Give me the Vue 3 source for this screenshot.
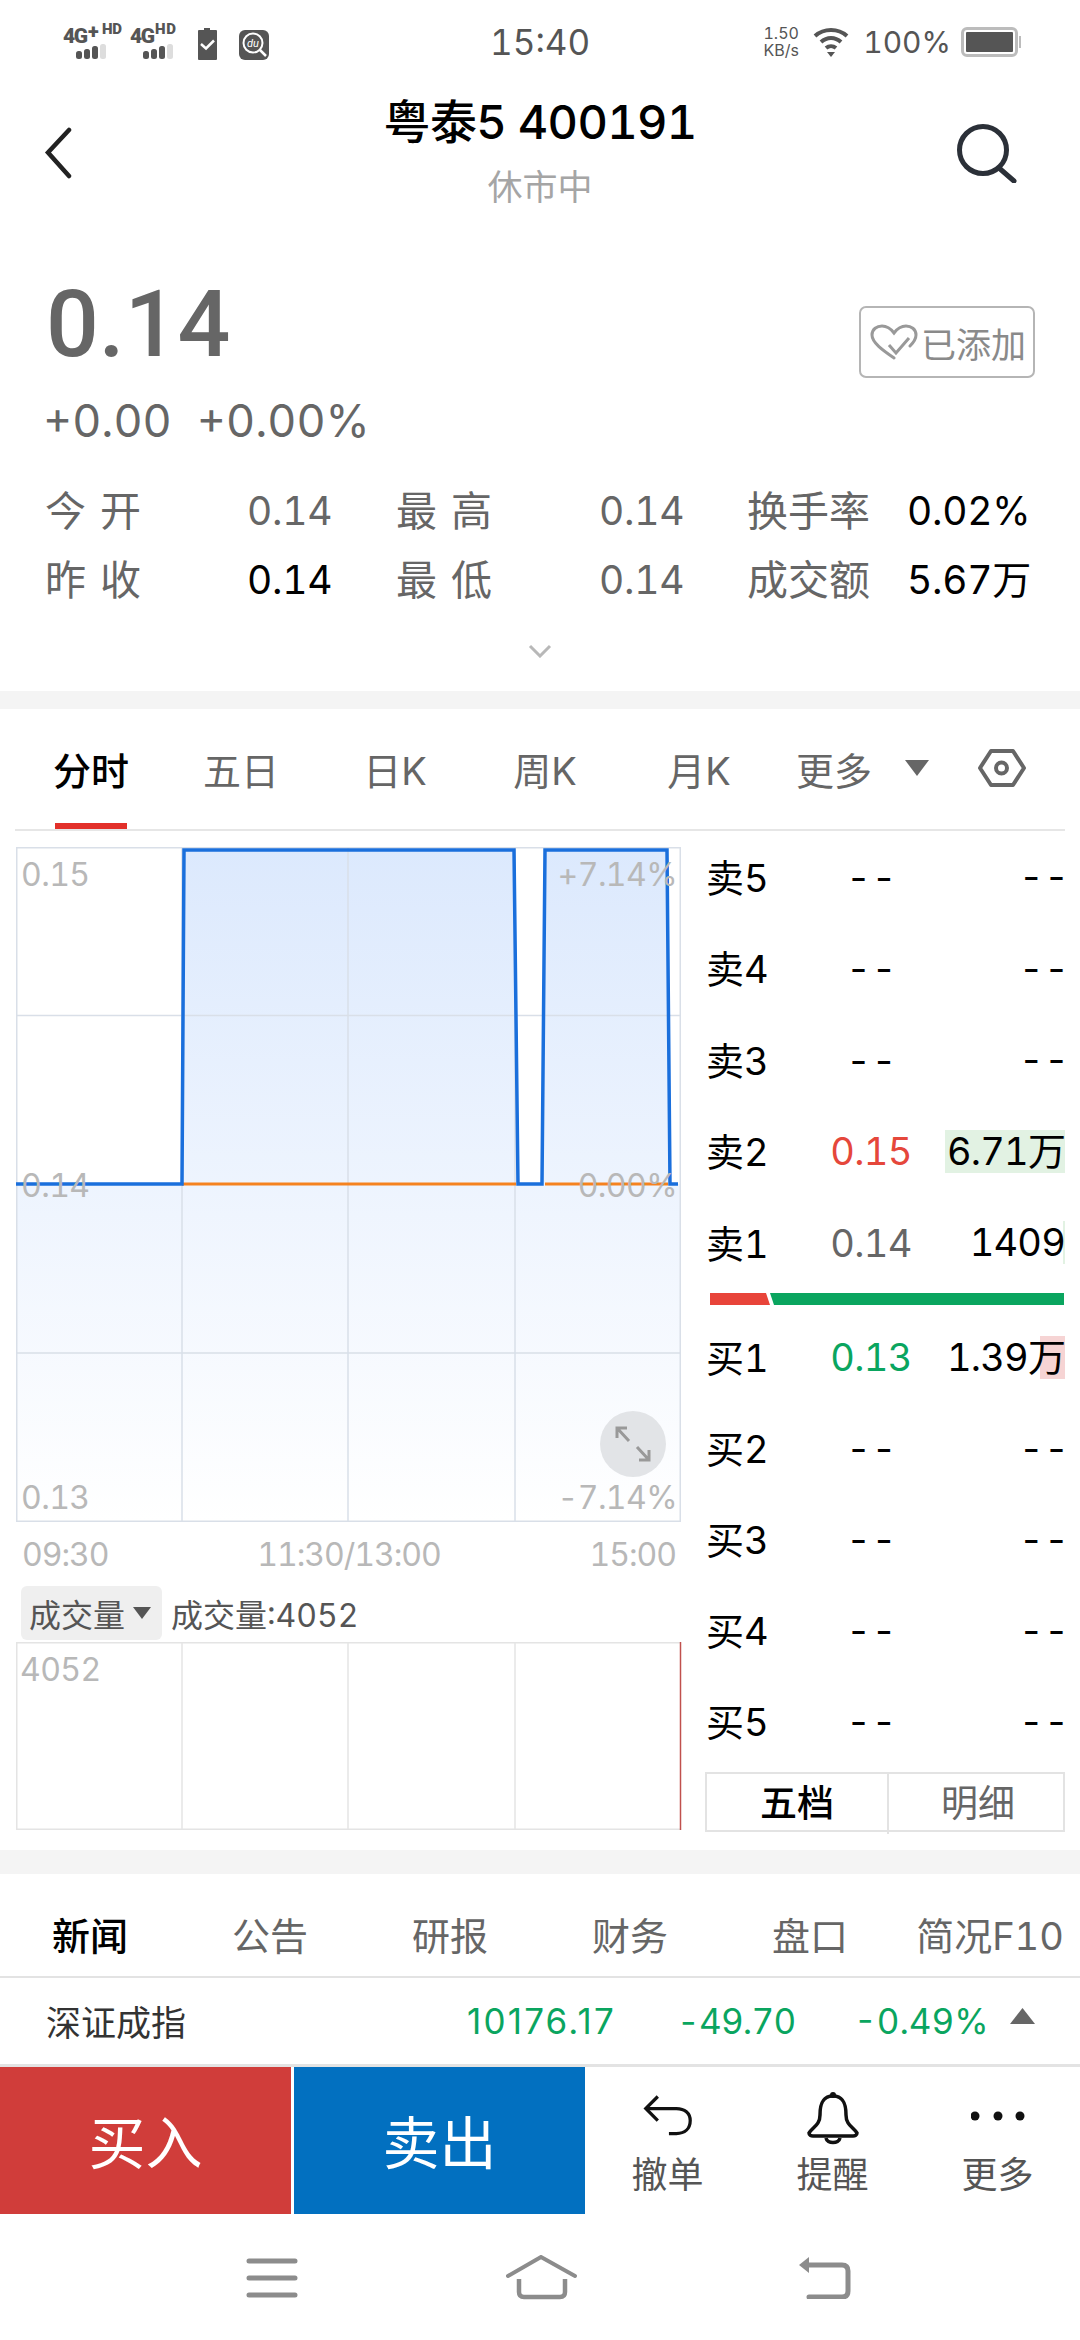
<script setup>
const stats = [
  ['今 开', '0.14', 'g', '最 高', '0.14', 'g', '换手率', '0.02%', 'k'],
  ['昨 收', '0.14', 'k', '最 低', '0.14', 'g', '成交额', '5.67万', 'k'],
]
const sells = [
  { l: '卖5', p: '- -', v: '- -' },
  { l: '卖4', p: '- -', v: '- -' },
  { l: '卖3', p: '- -', v: '- -' },
  { l: '卖2', p: '0.15', v: '6.71万', c: 'red', bg: 120, col: '#e2f2e3' },
  { l: '卖1', p: '0.14', v: '1409', c: 'gray', bg: 2, col: '#e2f2e3' },
]
const buys = [
  { l: '买1', p: '0.13', v: '1.39万', c: 'green', bg: 25, col: '#f6d4d4' },
  { l: '买2', p: '- -', v: '- -' },
  { l: '买3', p: '- -', v: '- -' },
  { l: '买4', p: '- -', v: '- -' },
  { l: '买5', p: '- -', v: '- -' },
]
const newsTabs = ['新闻', '公告', '研报', '财务', '盘口', '简况F10']
const vLines = [166, 332, 499]
</script>

<template>
  <div class="page">
    <div class="status">
      <svg class="st-left" width="230" height="44" viewBox="0 0 230 44">
        <g fill="#555" font-family="Roboto, sans-serif" font-weight="900">
          <text x="2" y="24" font-size="21" textLength="25">4G</text>
          <text x="27" y="19" font-size="20">+</text>
          <text x="41" y="15" font-size="15" textLength="20">HD</text>
          <text x="69" y="24" font-size="21" textLength="25">4G</text>
          <text x="94" y="15" font-size="15" textLength="21">HD</text>
          <rect x="15" y="32" width="6" height="8" rx="2.500" />
          <rect x="23" y="30" width="6" height="10" rx="2.500" />
          <rect x="31" y="27" width="6" height="13" rx="2.500" />
          <rect x="82" y="32" width="6" height="8" rx="2.500" />
          <rect x="90" y="30" width="6" height="10" rx="2.500" />
          <rect x="98" y="27" width="6" height="13" rx="2.500" />
        </g>
        <rect x="39" y="25" width="6" height="15" rx="2.500" fill="#ddd" />
        <rect x="106" y="25" width="6" height="15" rx="2.500" fill="#ddd" />
        <path d="M137 12a1 1 0 0 1 1-1h5v-2h6v2h6a1 1 0 0 1 1 1v28a1 1 0 0 1-1 1h-17a1 1 0 0 1-1-1z" fill="#555" />
        <path d="M140 25l5 4.500 8-8" fill="none" stroke="#fff" stroke-width="2.500" />
        <rect x="178" y="11" width="30" height="30" rx="6" fill="#555" />
        <circle cx="192" cy="24" r="9.500" fill="#555" stroke="#fff" stroke-width="2" />
        <path d="M199 31l6 6" stroke="#fff" stroke-width="2.500" />
        <text x="192" y="28" font-size="11" font-style="italic" fill="#fff" text-anchor="middle" font-family="Roboto, sans-serif">du</text>
      </svg>
      <div class="st-time">15:40</div>
      <div class="st-right">
        <div class="speed"><span>1.50</span><span>KB/s</span></div>
        <svg class="wifi" width="36" height="30" viewBox="0 0 36 30">
          <path d="M2 9C11 1 25 1 34 9" fill="none" stroke="#555" stroke-width="4" />
          <path d="M8 15C14 9.500 22 9.500 28 15" fill="none" stroke="#555" stroke-width="4" />
          <path d="M13 21C16 18.500 20 18.500 23 21" fill="none" stroke="#555" stroke-width="4" />
          <path d="M14 25h8l-4 5z" fill="#555" />
        </svg>
        <span class="pct">100%</span>
        <div class="batt"><i></i></div>
        <div class="nub"></div>
      </div>
    </div>

    <div class="header">
      <svg class="back" width="30" height="52" viewBox="0 0 30 52">
        <path d="M26 3L5 25.500 26 49" fill="none" stroke="#222" stroke-width="4.500" stroke-linecap="round" />
      </svg>
      <div class="titles">
        <div class="title">粤泰5 400191</div>
        <div class="sub">休市中</div>
      </div>
      <svg class="search" width="62" height="60" viewBox="0 0 62 60">
        <circle cx="27" cy="27" r="23.500" fill="none" stroke="#2b3038" stroke-width="5" />
        <path d="M43 45l15 13" stroke="#2b3038" stroke-width="5" stroke-linecap="round" />
      </svg>
    </div>

    <div class="quote">
      <div class="price-row">
        <div>
          <div class="price">0.14</div>
          <div class="change"><span>+0.00</span><span>+0.00%</span></div>
        </div>
        <div class="added">
          <svg width="48" height="36" viewBox="0 0 48 36">
            <path d="M24 34C14 27 2 19 2 11 2 5 7 2 12 2c5 0 9 3 12 7 3-4 7-7 12-7 5 0 10 3 10 9 0 4-3 8-6 11" fill="none" stroke="#999" stroke-width="3" stroke-linecap="round" />
            <path d="M19 21l7 8 13-15" fill="none" stroke="#999" stroke-width="3" />
          </svg>
          <span>已添加</span>
        </div>
      </div>
      <div class="stats">
        <template v-for="(r, i) in stats" :key="i">
          <span class="lab">{{ r[0] }}</span><span :class="r[2]">{{ r[1] }}</span>
          <span class="lab">{{ r[3] }}</span><span :class="r[5]">{{ r[4] }}</span>
          <span class="lab">{{ r[6] }}</span><span :class="r[8]">{{ r[7] }}</span>
        </template>
      </div>
      <svg class="chev" width="24" height="14" viewBox="0 0 24 14">
        <path d="M2 2l10 10 10-10" fill="none" stroke="#b8b8b8" stroke-width="3" />
      </svg>
    </div>

    <div class="band"></div>

    <div class="tabs">
      <div class="tab on">分时</div>
      <div class="tab">五日</div>
      <div class="tab">日K</div>
      <div class="tab">周K</div>
      <div class="tab">月K</div>
      <div class="tab">更多</div>
      <svg class="tri" width="24" height="16" viewBox="0 0 24 16"><path d="M0 0h24L12 16z" fill="#666" /></svg>
      <svg class="hex" width="48" height="40" viewBox="0 0 48 40">
        <path d="M13 3h22l11 17-11 17H13L2 20z" fill="none" stroke="#666" stroke-width="4" stroke-linejoin="round" />
        <circle cx="23.500" cy="20" r="5.500" fill="none" stroke="#666" stroke-width="4" />
      </svg>
    </div>

    <div class="body">
      <div class="left">
        <div class="chart">
          <svg width="666" height="675" viewBox="0 0 666 675">
            <defs>
              <linearGradient id="fillg" x1="0" y1="0" x2="0" y2="1">
                <stop offset="0" stop-color="#dce9fd" />
                <stop offset="1" stop-color="#ffffff" />
              </linearGradient>
            </defs>
            <rect x="0.500" y="0.500" width="664" height="674" fill="#fff" />
            <path d="M0 337H166L168 3H498L502 337H526L529 3H651L654 337H664V674H0Z" fill="url(#fillg)" />
            <g stroke="#d9dfe8" stroke-width="1.500" fill="none">
              <path d="M0.750 0V675M664.250 0V675M0 0.750H665M0 168.500H665M0 506H665M0 674.250H665" />
              <path v-for="x in vLines" :key="x" :d="`M${x} 0V675`" />
            </g>
            <path d="M166 337H500M529 337H652" stroke="#f5821f" stroke-width="3" fill="none" />
            <path d="M0 337H166L168 3H498L502 337H526L529 3H651L654 337H662" stroke="#1a6fdc" stroke-width="3.500" fill="none" />
          </svg>
          <span class="ax tl">0.15</span>
          <span class="ax tr">+7.14%</span>
          <span class="ax ml">0.14</span>
          <span class="ax mr">0.00%</span>
          <span class="ax bl">0.13</span>
          <span class="ax br">-7.14%</span>
          <div class="expand">
            <svg width="36" height="36" viewBox="0 0 36 36">
              <path d="M2 12V2H12M2 2L14 15M34 24V34H24M34 34L22 21" fill="none" stroke="#999" stroke-width="3" />
            </svg>
          </div>
        </div>
        <div class="times"><span>09:30</span><span>11:30/13:00</span><span>15:00</span></div>
        <div class="vol-head">
          <div class="drop">成交量<svg width="18" height="12" viewBox="0 0 18 12"><path d="M0 0h18L9 12z" fill="#555" /></svg></div>
          <span>成交量:4052</span>
        </div>
        <div class="vol">
          <svg width="666" height="188" viewBox="0 0 666 188">
            <g stroke="#e4e4e4" stroke-width="1.500" fill="none">
              <path d="M0.750 0V188M0 0.750H665M0 187.250H665" />
              <path v-for="x in vLines" :key="x" :d="`M${x} 0V188`" />
            </g>
            <path d="M664.500 0V188" stroke="#c0504d" stroke-width="1.500" />
          </svg>
          <span class="ax vlab">4052</span>
        </div>
      </div>

      <div class="right">
        <div v-for="r in sells" :key="r.l" class="row sell">
          <span class="r-lab">{{ r.l }}</span>
          <span class="r-p" :class="r.c">{{ r.p }}</span>
          <span class="r-v">
            <i v-if="r.bg" class="r-bg" :style="{ width: r.bg + 'px', background: r.col }"></i>
            <b :class="{ dash: !r.bg }">{{ r.v }}</b>
          </span>
        </div>
        <svg class="ratio" width="354" height="12" viewBox="0 0 354 12">
          <path d="M0 0H56L60 12H0Z" fill="#e8443a" />
          <path d="M60 0H354V12H64Z" fill="#0aa55f" />
        </svg>
        <div v-for="r in buys" :key="r.l" class="row buy">
          <span class="r-lab">{{ r.l }}</span>
          <span class="r-p" :class="r.c">{{ r.p }}</span>
          <span class="r-v">
            <i v-if="r.bg" class="r-bg" :style="{ width: r.bg + 'px', background: r.col }"></i>
            <b :class="{ dash: !r.bg }">{{ r.v }}</b>
          </span>
        </div>
        <div class="seg"><div class="seg-on">五档</div><div>明细</div></div>
      </div>
    </div>

    <div class="band low"></div>

    <div class="news">
      <div v-for="(t, i) in newsTabs" :key="t" class="n-tab" :class="{ on: i === 0 }">{{ t }}</div>
    </div>

    <div class="index">
      <span class="i-name">深证成指</span>
      <span class="i-a">10176.17</span>
      <span class="i-b">-49.70</span>
      <span class="i-c">-0.49%</span>
      <svg width="25" height="16" viewBox="0 0 25 16"><path d="M12.500 0L25 16H0z" fill="#666" /></svg>
    </div>

    <div class="actions">
      <div class="buybtn">买入</div>
      <div class="sellbtn">卖出</div>
      <div class="act">
        <svg class="i-undo" width="50" height="44" viewBox="0 0 54 46">
          <path d="M16 3L3 16l13 13" fill="none" stroke="#111" stroke-width="3.500" />
          <path d="M4 16H36C45 16 51 21 51 29 51 38 45 43 36 43H28" fill="none" stroke="#111" stroke-width="3.500" />
        </svg>
        <span>撤单</span>
      </div>
      <div class="act">
        <svg class="i-bell" width="54" height="54" viewBox="0 0 54 54">
          <path d="M27 5C16 5 14 14 14 24 14 34 7 36 3 42 3 44 5 45 7 45H47C49 45 51 44 51 42 47 36 40 34 40 24 40 14 38 5 27 5Z" fill="none" stroke="#111" stroke-width="3.500" />
          <circle cx="27" cy="4" r="3" fill="#111" />
          <path d="M20 47C21 53 33 53 34 47" fill="none" stroke="#111" stroke-width="3.500" />
        </svg>
        <span>提醒</span>
      </div>
      <div class="act">
        <svg class="i-more" width="54" height="44" viewBox="0 0 54 44">
          <circle cx="4" cy="22" r="4.500" fill="#111" />
          <circle cx="27" cy="22" r="4.500" fill="#111" />
          <circle cx="49" cy="22" r="4.500" fill="#111" />
        </svg>
        <span>更多</span>
      </div>
    </div>

    <div class="nav">
      <svg class="n-menu" width="52" height="40" viewBox="0 0 52 40">
        <path d="M3 3H49M3 20H49M3 37H49" stroke="#8c8c8c" stroke-width="5" stroke-linecap="round" />
      </svg>
      <svg class="n-home" width="72" height="46" viewBox="0 0 72 46">
        <path d="M2 21L35 2 69 21" fill="none" stroke="#8c8c8c" stroke-width="4" stroke-linecap="round" />
        <path d="M13 24V37Q13 42 18 42H54Q59 42 59 37V24" fill="none" stroke="#8c8c8c" stroke-width="4.500" />
      </svg>
      <svg class="n-back" width="54" height="44" viewBox="0 0 54 44">
        <path d="M2 10L12 2V18Z" fill="#8c8c8c" />
        <path d="M10 10H45C49 10 51 12 51 16V36C51 40 49 42 45 42H12" fill="none" stroke="#8c8c8c" stroke-width="5" stroke-linecap="round" />
      </svg>
    </div>
  </div>
</template>

<style>
html, body { margin: 0; background: #fff; }
</style>

<style scoped>
.page {
  width: 1080px;
  height: 2340px;
  overflow: hidden;
  background: #fff;
  color: #000;
  font-family: Inter, "Noto Sans CJK SC", sans-serif;
  font-variant-numeric: tabular-nums;
  display: flex;
  flex-direction: column;
}

/* status bar */
.status {
  height: 84px;
  flex: none;
  display: grid;
  grid-template-columns: 1fr 100px 1fr;
  align-items: center;
  padding-left: 61px;
  padding-right: 61px;
  box-sizing: border-box;
}
.st-left { display: block; margin-top: -2px; }
.st-time { font-size: 35px; color: #555; line-height: 40px; text-align: center; }
.st-right { display: flex; align-items: center; justify-content: flex-end; margin-right: -2px; }
.speed { display: flex; flex-direction: column; font-size: 16px; line-height: 17px; color: #555; align-items: center; width: 36px; }
.wifi { margin-left: 14px; }
.pct { font-size: 30px; color: #555; margin-left: 14px; }
.batt { width: 57px; height: 30px; margin-left: 10px; box-sizing: border-box; border: 3px solid #bcbcbc; border-radius: 6px; padding: 2px; display: flex; }
.batt i { flex: 1; background: #555; border-radius: 1px; }
.nub { width: 2px; height: 12px; background: #bcbcbc; margin-left: 1px; }

/* header */
.header {
  height: 146px;
  flex: none;
  display: grid;
  grid-template-columns: 1fr auto 1fr;
}
.back { margin: 43px 0 0 43px; }
.search { margin: 39px 62px 0 auto; }
.titles { text-align: center; }
.title { font-size: 47px; font-weight: 500; line-height: 60px; margin-top: 8px; letter-spacing: -0.7px; }
.sub { font-size: 35px; color: #a5a5a5; line-height: 50px; margin-top: 10px; }

/* quote */
.quote { height: 461px; flex: none; padding: 0 46px; box-sizing: border-box; position: relative; display: flex; flex-direction: column; }
.price-row { display: flex; justify-content: space-between; }
.price { font-family: Roboto, sans-serif; font-size: 93px; font-weight: 500; color: #666; line-height: 100px; margin-top: 45px; }
.change { font-size: 45px; color: #666; line-height: 60px; margin-top: 16px; display: flex; gap: 25px; margin-left: -3px; }
.added {
  width: 176px; height: 72px; margin-top: 76px; margin-right: -1px; box-sizing: border-box;
  border: 2.500px solid #b5b5b5; border-radius: 7px;
  display: flex; align-items: center; color: #8a8a8a; font-size: 35px; padding-left: 9px;
}
.added svg { flex: none; margin-right: 3px; }
.stats {
  margin-top: 25px;
  display: grid;
  grid-template-columns: 201px 150px 202px 149px 159px auto;
  grid-auto-rows: 69px;
  align-items: center;
  font-size: 39px;
  white-space: nowrap;
}
.lab { color: #666; word-spacing: 3px; font-size: 41px; line-height: 50px; margin-left: -1px; }
.stats .g { color: #666; line-height: 50px; letter-spacing: -0.3px; }
.stats .k { color: #000; line-height: 50px; letter-spacing: -0.3px; }
.chev { position: absolute; left: 528px; top: 414px; }

.band { height: 18px; flex: none; background: #f4f4f4; }
.band.low { height: 24px; }

/* tabs */
.tabs {
  height: 122px; flex: none; margin: 0 15px; box-sizing: border-box;
  border-bottom: 2px solid #e6e6e6; display: grid;
  grid-template-columns: 152px 148px 160px 140px 168px 102px 60px 1fr;
  align-items: start;
  position: relative;
}
.tab { text-align: center; font-size: 38px; color: #666; line-height: 50px; padding-top: 37px; }
.tab.on { color: #000; font-weight: 500; }
.tab.on::after { content: ""; position: absolute; left: 40px; top: 114px; width: 72px; height: 6px; background: #e2302a; }
.tri { margin: 51px 0 0 20px; }
.hex { margin-top: 39px; margin-left: 33px; }

/* body */
.body { height: 1019px; flex: none; display: flex; }
.left { width: 667px; margin-left: 16px; padding-top: 16px; flex: none; }
.chart, .vol { position: relative; height: 675px; }
.chart svg, .vol svg { display: block; }
.ax { position: absolute; font-size: 32px; color: #b8b8b8; line-height: 40px; letter-spacing: -0.6px; }
.tl { left: 5px; top: 8px; }
.tr { right: 6px; top: 8px; }
.ml { left: 5px; top: 319px; }
.mr { right: 6px; top: 319px; }
.bl { left: 5px; top: 631px; }
.br { right: 6px; top: 631px; }
.vlab { left: 4px; top: 8px; }
.expand {
  position: absolute; left: 584px; top: 564px; width: 66px; height: 66px;
  border-radius: 50%; background: #e2e4e7; display: flex; align-items: center; justify-content: center;
}
.times { display: flex; justify-content: space-between; padding: 0 7px 0 6px; font-size: 32px; line-height: 40px; color: #b8b8b8; margin-top: 13px; letter-spacing: -1px; }
.vol-head { display: flex; align-items: center; gap: 9px; margin: 11px 0 0 5px; height: 54px; font-size: 32px; color: #555; }
.drop { width: 141px; height: 54px; background: #efefef; border-radius: 6px; display: flex; align-items: center; padding-left: 8px; box-sizing: border-box; gap: 8px; }
.drop svg { flex: none; }
.vol { height: 188px; margin-top: 2px; }

/* right panel */
.right { width: 360px; margin-left: 22px; flex: none; display: flex; flex-direction: column; }
.row { display: grid; grid-template-columns: 90px 152px 1fr; align-items: center; font-size: 38px; }
.row.sell { height: 91.500px; }
.row.buy { height: 91px; }
.r-lab { color: #000; margin-left: 1px; padding-bottom: 3px; }
.r-p { text-align: center; color: #000; word-spacing: -8px; letter-spacing: -0.7px; }
.r-p.red { color: #e5473b; }
.r-p.gray { color: #666; }
.r-p.green { color: #0aa55f; }
.r-v { position: relative; text-align: right; height: 43px; line-height: 43px; white-space: nowrap; letter-spacing: -0.8px; word-spacing: -8px; }
.r-v b { font-weight: 400; position: relative; }
.r-v b.dash { left: 3px; }
.r-bg { position: absolute; right: 0; top: 0; height: 43px; }
.ratio { margin: 4px 0 7px 5px; display: block; flex: none; }
.seg { display: grid; grid-template-columns: 180px 180px; height: 60px; box-sizing: border-box; border: 2px solid #e3e3e3; margin-top: 5px; font-size: 37px; color: #666; text-align: center; line-height: 60px; }
.seg > div + div { border-left: 2px solid #e3e3e3; }
.seg-on { color: #000; font-weight: 500; }

/* news */
.news { height: 104px; flex: none; box-sizing: border-box; border-bottom: 2px solid #e3e3e3; display: grid; grid-template-columns: repeat(6, 180px); font-size: 38px; color: #666; text-align: center; line-height: 50px; padding-top: 37px; }
.n-tab { white-space: nowrap; }
.n-tab.on { color: #000; font-weight: 500; }

.index { height: 89px; flex: none; box-sizing: border-box; border-bottom: 3px solid #e3e3e3; display: grid; grid-template-columns: 421px 210px 177px 156px auto; padding-left: 46px; align-items: center; font-size: 35px; color: #0aa55f; }
.i-name { color: #333; padding-bottom: 2px; }
.i-a { font-variant-numeric: proportional-nums; letter-spacing: 2.2px; }
.i-b { letter-spacing: -0.75px; }
.index svg { margin-top: -10px; }

/* actions */
.actions { height: 147px; flex: none; display: grid; grid-template-columns: 294px 291px 165px 165px 165px; align-items: stretch; }
.buybtn, .sellbtn { color: #fff; font-size: 57px; display: flex; align-items: center; justify-content: center; padding-bottom: 3px; }
.buybtn { background: #d03d3a; border-right: 3px solid #fff; }
.sellbtn { background: #0270c0; }
.act { display: flex; flex-direction: column; align-items: center; font-size: 36px; color: #555; }
.act svg { display: block; flex: none; }
.i-undo { margin-top: 26px; margin-bottom: -2px; }
.i-bell { margin-top: 24px; margin-bottom: -10px; }
.i-more { margin-top: 27px; margin-bottom: -3px; }
.act span { line-height: 46px; margin-top: 17px; }

/* nav */
.nav { flex: 1; display: grid; grid-template-columns: 260px 291px 1fr; padding: 41px 0 0 246px; align-items: start; }
.n-menu { margin-top: 3px; }
</style>
